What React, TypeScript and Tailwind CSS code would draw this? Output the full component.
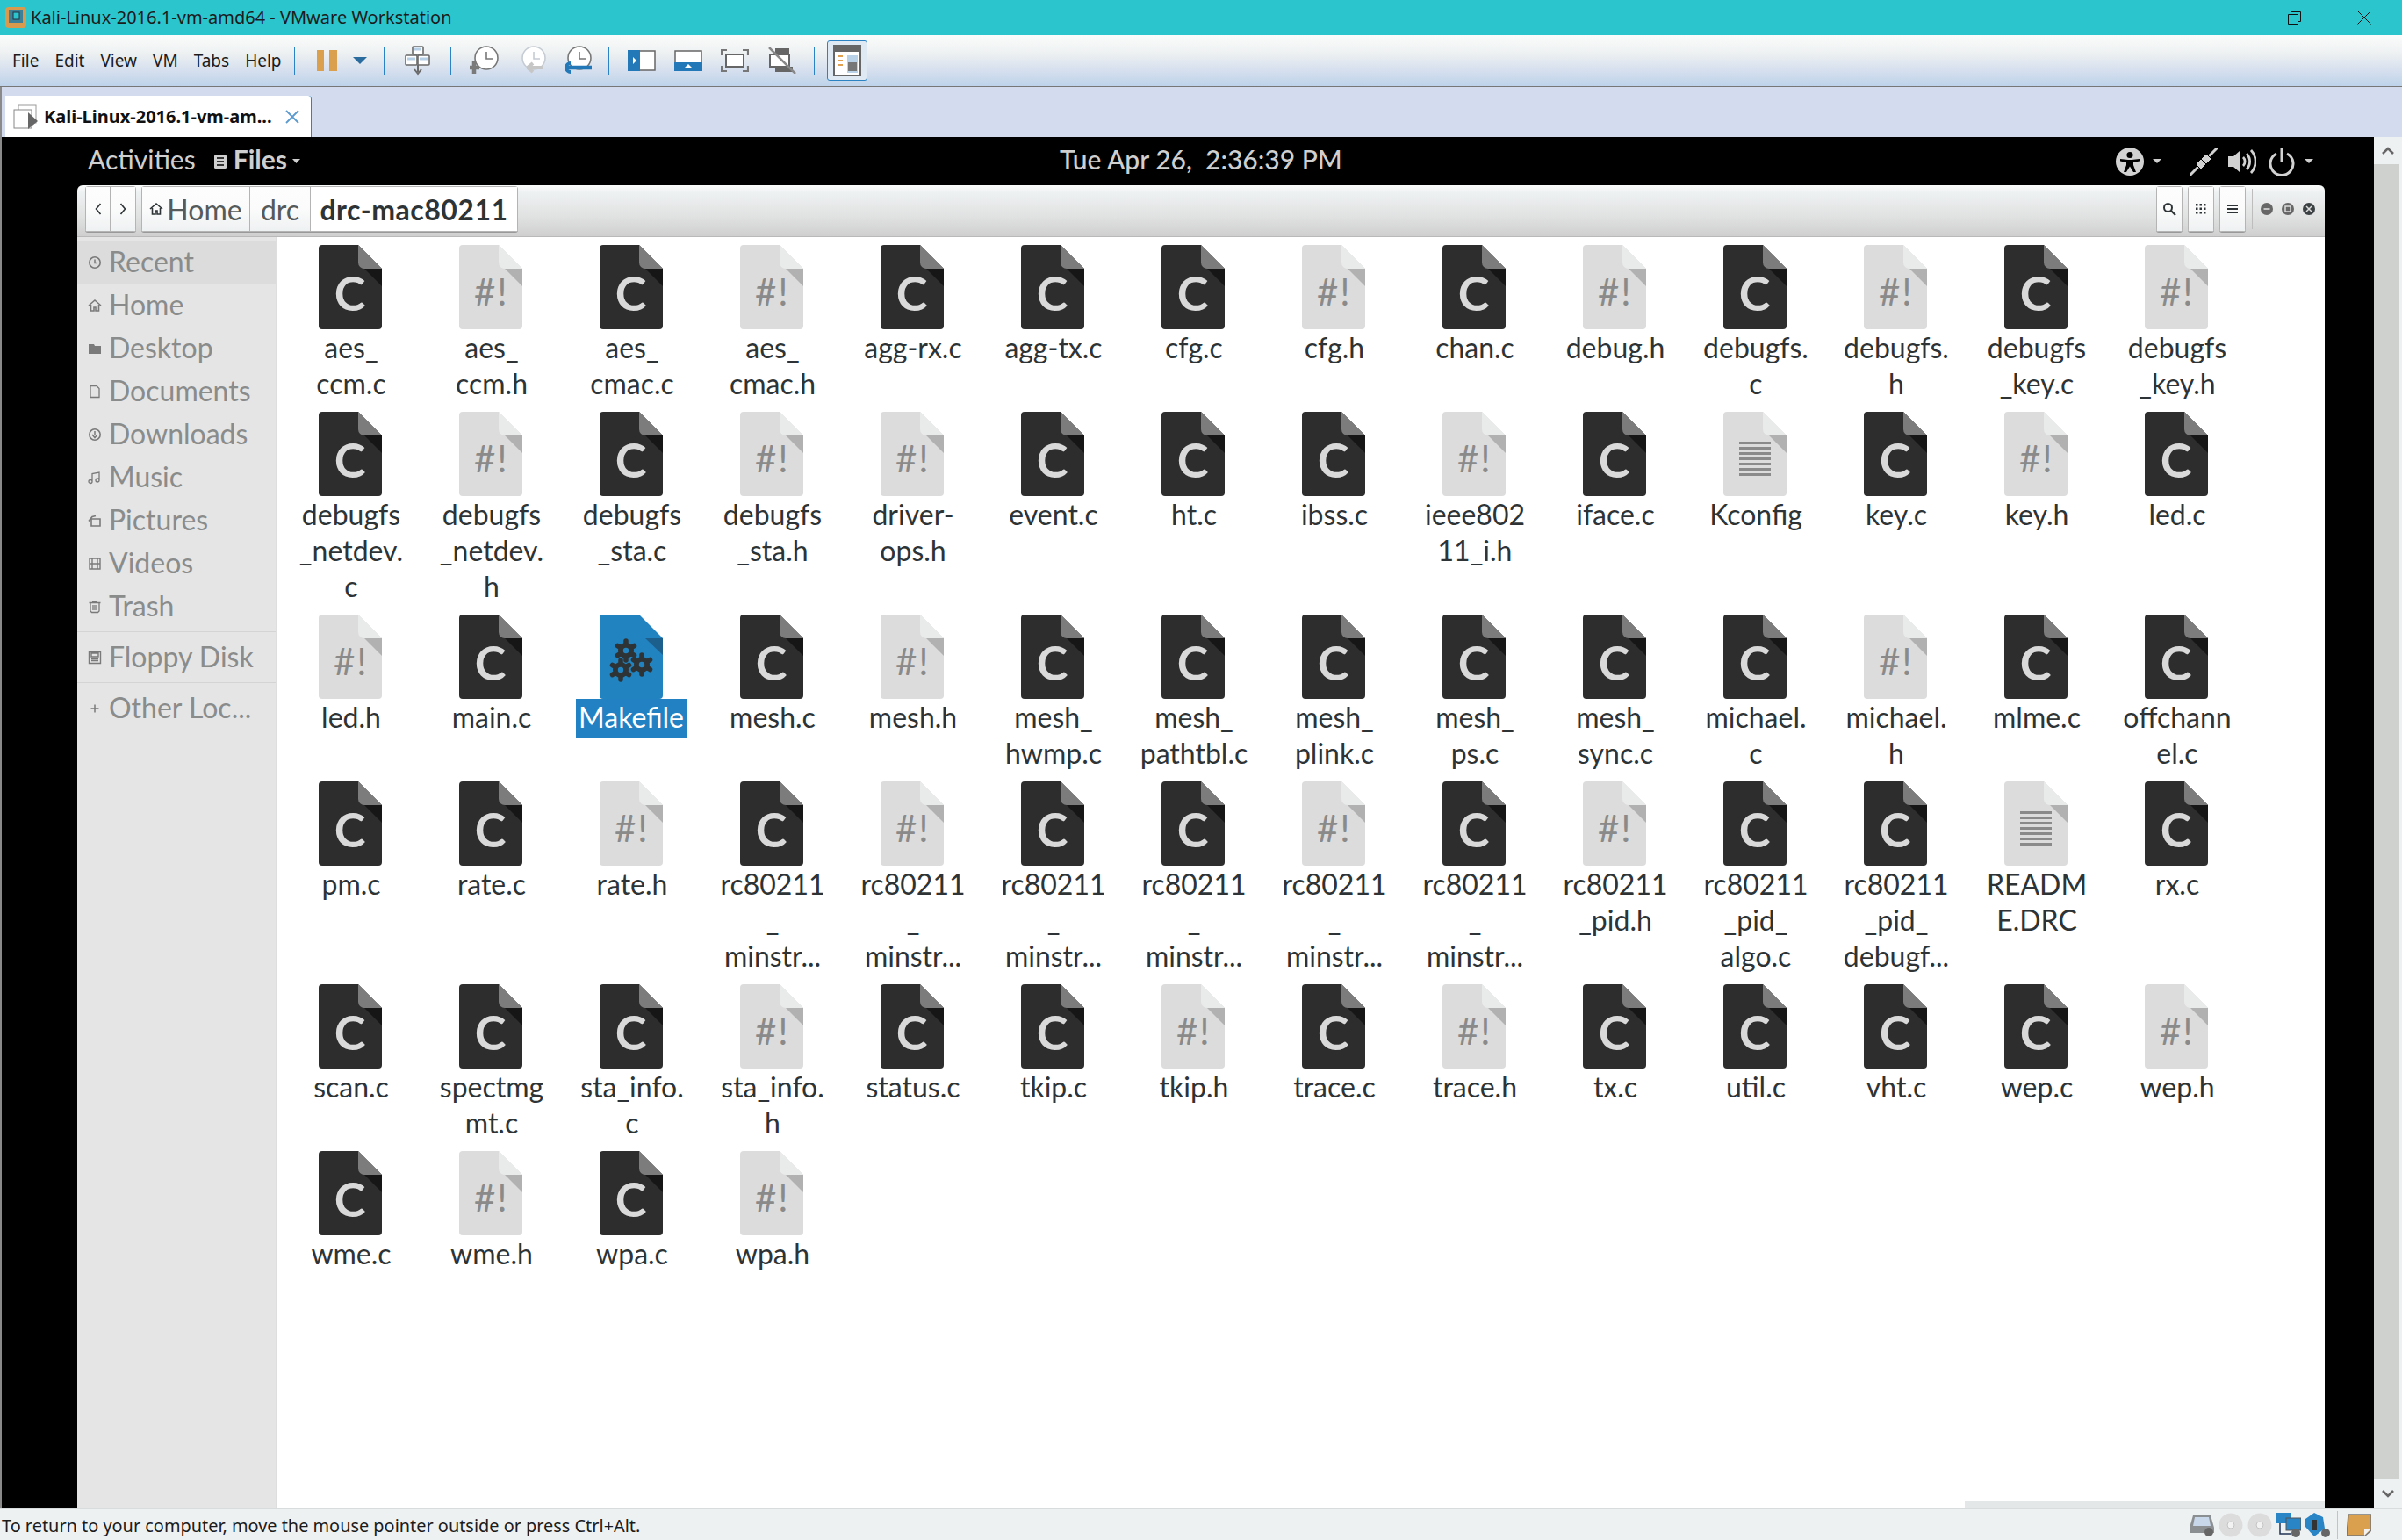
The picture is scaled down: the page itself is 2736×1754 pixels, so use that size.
const files = [
  'c aes_|ccm.c', 'h aes_|ccm.h', 'c aes_|cmac.c', 'h aes_|cmac.h', 'c agg-rx.c', 'c agg-tx.c', 'c cfg.c', 'h cfg.h', 'c chan.c', 'h debug.h', 'c debugfs.|c', 'h debugfs.|h', 'c debugfs|_key.c', 'h debugfs|_key.h',
  'c debugfs|_netdev.|c', 'h debugfs|_netdev.|h', 'c debugfs|_sta.c', 'h debugfs|_sta.h', 'h driver-|ops.h', 'c event.c', 'c ht.c', 'c ibss.c', 'h ieee802|11_i.h', 'c iface.c', 't Kconfig', 'c key.c', 'h key.h', 'c led.c',
  'h led.h', 'c main.c', 'm Makefile', 'c mesh.c', 'h mesh.h', 'c mesh_|hwmp.c', 'c mesh_|pathtbl.c', 'c mesh_|plink.c', 'c mesh_|ps.c', 'c mesh_|sync.c', 'c michael.|c', 'h michael.|h', 'c mlme.c', 'c offchann|el.c',
  'c pm.c', 'c rate.c', 'h rate.h', 'c rc80211|_|minstr...', 'h rc80211|_|minstr...', 'c rc80211|_|minstr...', 'c rc80211|_|minstr...', 'h rc80211|_|minstr...', 'c rc80211|_|minstr...', 'h rc80211|_pid.h', 'c rc80211|_pid_|algo.c', 'c rc80211|_pid_|debugf...', 't READM|E.DRC', 'c rx.c',
  'c scan.c', 'c spectmg|mt.c', 'c sta_info.|c', 'h sta_info.|h', 'c status.c', 'c tkip.c', 'h tkip.h', 'c trace.c', 'h trace.h', 'c tx.c', 'c util.c', 'c vht.c', 'c wep.c', 'h wep.h',
  'c wme.c', 'h wme.h', 'c wpa.c', 'h wpa.h',
];

const BODY = 'M4 0H45L72 27V92a4 4 0 0 1-4 4H4a4 4 0 0 1-4-4V4a4 4 0 0 1 4-4Z';

function Gear({ x, y }: { x: number; y: number }) {
  return (
    <g transform={`translate(${x} ${y})`}>
      {[0, 60, 120].map((a) => (
        <line key={a} x1="0" y1="-11" x2="0" y2="11" stroke="#2e3436" strokeWidth="5.5" strokeLinecap="round" transform={`rotate(${a})`} />
      ))}
      <circle r="9" fill="#2e3436" />
      <circle r="3.2" fill="#2283c1" />
    </g>
  );
}

function FileIcon({ type }: { type: string }) {
  if (type === 'm') {
    return (
      <svg width="72" height="96" viewBox="0 0 72 96" className="shrink-0">
        <path d={BODY} fill="#2283c1" />
        <path d="M52 27H72V46Z" fill="#1d5f8c" />
        <Gear x={30} y={41} />
        <Gear x={48} y={57} />
        <Gear x={24} y={63} />
      </svg>
    );
  }
  const dark = type === 'c';
  return (
    <svg width="72" height="96" viewBox="0 0 72 96" className="shrink-0">
      <path d={BODY} fill={dark ? '#2d2d2d' : '#dcdcdc'} />
      <path d="M45 0L72 27H52a7 7 0 0 1-7-7Z" fill={dark ? '#7c7c7c' : '#e9eaea'} />
      <path d="M52 27H72V47Z" fill={dark ? '#161616' : '#b0b1b0'} />
      {dark && (
        <text x="35.5" y="74.5" textAnchor="middle" fontSize="54" fontWeight="700" fontFamily="Lato, sans-serif" fill="#d9d9d9">
          C
        </text>
      )}
      {type === 'h' && (
        <text x="17" y="69" fontSize="42" fontFamily="Lato, sans-serif" fill="#8a8a8a" letterSpacing="2">
          #!
        </text>
      )}
      {type === 't' && [34, 40, 46, 52, 58, 64, 70].map((y) => <rect key={y} x="18" y={y} width="36" height="3" fill="#8a8a8a" />)}
    </svg>
  );
}

function FileCell({ spec }: { spec: string }) {
  const type = spec[0];
  const lines = spec.slice(2).split('|');
  const selected = type === 'm';
  return (
    <div className="flex flex-col items-center">
      <FileIcon type={type} />
      <div className={`pb-[3px] text-center text-[32px] leading-[41px] ${selected ? 'w-[126px] bg-[#2181c2] text-white' : 'pl-[2px] text-[#2e3436]'}`}>
        {lines.map((l, i) => (
          <div key={i} className="whitespace-nowrap">
            {l}
          </div>
        ))}
      </div>
    </div>
  );
}

const sideIcons: Record<string, React.ReactNode> = {
  Recent: (
    <>
      <circle cx="8" cy="8" r="6.2" fill="none" stroke="currentColor" strokeWidth="1.6" />
      <path d="M8 4.5V8.5H11" fill="none" stroke="currentColor" strokeWidth="1.5" />
    </>
  ),
  Home: <path d="M1 8L8 2L15 8M3.5 7V14H7V10H9V14H12.5V7" fill="none" stroke="currentColor" strokeWidth="1.6" />,
  Desktop: <path d="M1 3H7L8 5H15V14H1Z" fill="currentColor" />,
  Documents: <path d="M3 1.5H10L13 4.5V14.5H3Z" fill="none" stroke="currentColor" strokeWidth="1.3" />,
  Downloads: (
    <>
      <circle cx="8" cy="8" r="6.2" fill="none" stroke="currentColor" strokeWidth="1.6" />
      <path d="M8 4V9M5 8L8 11.5L11 8" fill="none" stroke="currentColor" strokeWidth="1.5" />
    </>
  ),
  Music: <path d="M5 12.5V3.5L13 2V11M5 12.5a2 2 0 1 1-4 0a2 2 0 0 1 4 0ZM13 11a2 2 0 1 1-4 0a2 2 0 0 1 4 0Z" fill="none" stroke="currentColor" strokeWidth="1.3" />,
  Pictures: <path d="M4 6H14V14H4ZM1 8.5L5 3.5L9 2.5" fill="none" stroke="currentColor" strokeWidth="1.6" />,
  Videos: <path d="M2 2H14V14H2ZM5 2V14M11 2V14M2 8H14" fill="none" stroke="currentColor" strokeWidth="1.4" />,
  Trash: <path d="M1.5 3.5H14.5M3 3.5V13L4.5 14.5H11.5L13 13V3.5M5 2H11M6 6V12M8 6V12M10 6V12" fill="none" stroke="currentColor" strokeWidth="1.3" />,
  'Floppy Disk': <path d="M1.5 1.5H14.5V14.5H1.5ZM4 3H12V7H4ZM4 9.5H12M4 11.5H12" fill="none" stroke="currentColor" strokeWidth="1.4" />,
  'Other Loc...': <path d="M8 3.5V12.5M3.5 8H12.5" fill="none" stroke="currentColor" strokeWidth="1.5" />,
};

function SideRow({ label, active }: { label: string; active?: boolean }) {
  return (
    <div className={`flex h-[49px] items-center gap-2 pl-3 text-[32px] text-[#8a8c8c] ${active ? 'bg-[#dcdcdc]' : ''}`}>
      <svg width="16" height="16" viewBox="0 0 16 16" className="shrink-0 text-[#7a7a7a]">
        {sideIcons[label]}
      </svg>
      <span className="-translate-y-px">{label}</span>
    </div>
  );
}

function Sep() {
  return <div className="h-8 w-px shrink-0 bg-[#2b83c4]" />;
}

function ClockIcon({ tone, children }: { tone: string; children: React.ReactNode }) {
  return (
    <svg width="36" height="34" viewBox="0 0 36 34" className="shrink-0">
      <circle cx="20" cy="14" r="13" fill="#fff" stroke={tone} strokeWidth="1.6" />
      <path d="M20 7V15H27" fill="none" stroke={tone} strokeWidth="1.6" />
      {children}
    </svg>
  );
}

function Toolbar() {
  return (
    <div className="flex h-[59px] shrink-0 items-center border-b border-[#777] bg-[linear-gradient(180deg,#fbfcfc_0%,#eef1f2_35%,#d5dfee_70%,#bed3ea_100%)] pl-[14px] text-[19px] text-[#1c1c1c] font-['Noto_Sans',sans-serif]">
      <div className="flex w-[321px] shrink-0 gap-[18px]">
        {['File', 'Edit', 'View', 'VM', 'Tabs', 'Help'].map((m) => (
          <span key={m}>{m}</span>
        ))}
      </div>
      <Sep />
      <div className="ml-[25px] flex gap-[6px]">
        <div className="h-6 w-2 bg-[#dba04e]" />
        <div className="h-6 w-[9px] bg-[#dba04e]" />
      </div>
      <svg width="16" height="8" viewBox="0 0 16 8" className="ml-[18px]">
        <path d="M0 0H16L8 8Z" fill="#2b6c9e" />
      </svg>
      <div className="ml-[19px]">
        <Sep />
      </div>
      <svg width="30" height="34" viewBox="0 0 30 34" className="ml-[23px]">
        <g fill="#fff" stroke="#6a6a6a" strokeWidth="1.6">
          <rect x="9" y="1" width="12" height="9" rx="1" />
          <rect x="1" y="11" width="13" height="11" rx="1" />
          <rect x="15" y="11" width="13" height="11" rx="1" />
        </g>
        <path d="M11 4H19M3 15H12M17 15H26" stroke="#b5cfe6" strokeWidth="3" />
        <path d="M15 22V30M11 27L15 32L19 27" fill="none" stroke="#6a6a6a" strokeWidth="2" />
      </svg>
      <div className="ml-[22px]">
        <Sep />
      </div>
      <div className="ml-[20px]">
        <ClockIcon tone="#777">
          <path d="M6 18V32M1 25H12" stroke="#7a7a7a" strokeWidth="4.5" />
        </ClockIcon>
      </div>
      <div className="ml-[18px]">
        <ClockIcon tone="#c6ccd4">
          <path d="M12 25H30M13 25L19 20M13 25L19 30" stroke="#c6c6c6" strokeWidth="4" fill="none" />
        </ClockIcon>
      </div>
      <div className="ml-[16px]">
        <ClockIcon tone="#777">
          <path d="M6 25H34" stroke="#2379b8" strokeWidth="4.5" />
          <path d="M10 20a5 5 0 1 0 0 10" fill="none" stroke="#2379b8" strokeWidth="4" />
        </ClockIcon>
      </div>
      <div className="ml-[17px]">
        <Sep />
      </div>
      <svg width="32" height="24" viewBox="0 0 32 24" className="ml-[21px]">
        <rect x="1" y="1" width="30" height="22" fill="#fff" stroke="#666" strokeWidth="1.5" />
        <rect width="14" height="24" fill="#2379b8" />
        <path d="M6 8L10 12L6 16Z" fill="#fff" />
      </svg>
      <svg width="32" height="24" viewBox="0 0 32 24" className="ml-[21px]">
        <rect x="1" y="1" width="30" height="22" fill="#fff" stroke="#666" strokeWidth="1.5" />
        <rect y="14" width="32" height="10" fill="#2379b8" />
        <path d="M12 20L16 16L20 20Z" fill="#fff" />
      </svg>
      <svg width="32" height="26" viewBox="0 0 32 26" className="ml-[21px]">
        <rect x="6" y="6" width="20" height="14" fill="#fff" stroke="#666" strokeWidth="2" />
        <path d="M1 7V1H7M25 1H31V7M1 19V25H7M25 25H31V19" fill="none" stroke="#777" strokeWidth="2.2" />
      </svg>
      <svg width="32" height="30" viewBox="0 0 32 30" className="ml-[22px]">
        <rect x="8" y="1" width="16" height="14" fill="#666" />
        <rect x="2" y="8" width="22" height="14" fill="#fff" stroke="#666" strokeWidth="2" />
        <rect x="8" y="22" width="20" height="6" fill="#666" />
        <path d="M1 0L31 30" stroke="#888" strokeWidth="2.5" />
      </svg>
      <div className="ml-[20px]">
        <Sep />
      </div>
      <div className="ml-[14px] flex h-[46px] w-[46px] items-center justify-center rounded-[3px] border border-[#2b83c4] bg-[#dfe9f3]">
        <svg width="32" height="36" viewBox="0 0 32 36">
          <rect width="32" height="36" fill="#666" />
          <rect x="2" y="8" width="28" height="26" fill="#fff" />
          <rect x="16" y="12" width="12" height="20" fill="#b9d2e8" />
          <rect x="17" y="20" width="10" height="10" fill="#777" />
          <path d="M5 13H11M5 18H11M5 23H11" stroke="#e0a050" strokeWidth="2" />
        </svg>
      </div>
    </div>
  );
}

function HeaderButton({ children, className = '' }: { children: React.ReactNode; className?: string }) {
  return (
    <div className={`flex h-[50px] items-center justify-center border-[#b4b4b4] bg-[linear-gradient(180deg,#fdfdfd_0%,#fbfbfb_50%,#eef1f2_100%)] ${className}`}>
      {children}
    </div>
  );
}

function WinDot({ bg, children }: { bg: string; children: React.ReactNode }) {
  return (
    <svg width="14" height="14" viewBox="0 0 14 14" className="shrink-0">
      <circle cx="7" cy="7" r="7" fill={bg} />
      {children}
    </svg>
  );
}

function WindowHeader() {
  return (
    <div className="flex h-[59px] shrink-0 items-center rounded-t-[6px] border-b border-[#b9b9b9] bg-[linear-gradient(180deg,#fafbfb_0%,#eef1f2_15%,#e1e2e2_60%,#cfcfcf_100%)] pb-[5px] pl-[9px] text-[32px]">
      <div className="flex rounded-[3px] border border-[#b4b4b4] shadow-[0_1px_0_#999]">
        <HeaderButton className="w-7 border-r">
          <svg width="10" height="16" viewBox="0 0 10 16">
            <path d="M7.5 2L2.5 8L7.5 14" fill="none" stroke="#2e3436" strokeWidth="1.6" />
          </svg>
        </HeaderButton>
        <HeaderButton className="w-7">
          <svg width="10" height="16" viewBox="0 0 10 16">
            <path d="M2.5 2L7.5 8L2.5 14" fill="none" stroke="#2e3436" strokeWidth="1.6" />
          </svg>
        </HeaderButton>
      </div>
      <div className="ml-[6px] flex rounded-[3px] border border-[#b4b4b4] shadow-[0_1px_0_#999]">
        <HeaderButton className="w-[123px] gap-[4px] border-r text-[#555a5a]">
          <svg width="16" height="16" viewBox="0 0 16 16">
            <path d="M1 8L8 2L15 8M3.5 7V14H7V10H9V14H12.5V7" fill="none" stroke="#2e3436" strokeWidth="1.6" />
          </svg>
          <span className="pt-[3px]">Home</span>
        </HeaderButton>
        <HeaderButton className="w-[69px] border-r pt-[3px] text-[#555a5a]">drc</HeaderButton>
        <div className="flex h-[50px] w-[235px] items-center justify-center bg-white pt-[3px] font-bold tracking-[0.5px] text-[#2e3436]">drc-mac80211</div>
      </div>
      <div className="ml-auto flex items-center gap-[6px]">
        <div className="flex rounded-[3px] border border-[#b4b4b4] shadow-[0_1px_0_#999]">
          <HeaderButton className="w-[28px]">
            <svg width="16" height="16" viewBox="0 0 16 16">
              <circle cx="6.5" cy="6.5" r="4.5" fill="none" stroke="#2e3436" strokeWidth="2" />
              <path d="M10 10L15 15" stroke="#2e3436" strokeWidth="2.2" />
            </svg>
          </HeaderButton>
        </div>
        <div className="flex rounded-[3px] border border-[#b4b4b4] shadow-[0_1px_0_#999]">
          <HeaderButton className="w-[28px]">
            <svg width="12" height="12" viewBox="0 0 12 12" fill="#2e3436">
              {[0, 4.5, 9].map((y) => [0, 4.5, 9].map((x) => <rect key={`${x}-${y}`} x={x} y={y} width="2.5" height="2.5" />))}
            </svg>
          </HeaderButton>
        </div>
        <div className="flex rounded-[3px] border border-[#b4b4b4] shadow-[0_1px_0_#999]">
          <HeaderButton className="w-[28px]">
            <svg width="12" height="12" viewBox="0 0 12 12" fill="#2e3436">
              <rect y="1" width="12" height="2" />
              <rect y="5" width="12" height="2" />
              <rect y="9" width="12" height="2" />
            </svg>
          </HeaderButton>
        </div>
        <div className="ml-[1px] h-[46px] w-px bg-[#bdbdbd]" />
        <div className="ml-[3px] mr-[11px] flex gap-[10px]">
          <WinDot bg="#676767">
            <path d="M3.5 7H10.5" stroke="#ddd" strokeWidth="1.6" />
          </WinDot>
          <WinDot bg="#676767">
            <rect x="4" y="4" width="6" height="6" fill="none" stroke="#ddd" strokeWidth="1.5" />
          </WinDot>
          <WinDot bg="#3b4043">
            <path d="M4 4L10 10M10 4L4 10" stroke="#ddd" strokeWidth="1.5" />
          </WinDot>
        </div>
      </div>
    </div>
  );
}

function TopBar() {
  return (
    <div className="flex h-[55px] shrink-0 items-center text-[30px] text-[#cfcfcf]">
      <div className="flex w-[1205px] shrink-0 items-center pl-[98px]">
        <span className="-translate-y-[2px]">Activities</span>
        <svg width="14" height="16" viewBox="0 0 14 16" className="ml-[21px]">
          <rect width="14" height="16" rx="1.5" fill="#cfcfcf" />
          <path d="M3 4H11M3 8H11M3 12H11" stroke="#000" strokeWidth="1.6" />
        </svg>
        <span className="ml-2 -translate-y-[2px] font-bold">Files</span>
        <svg width="9" height="5" viewBox="0 0 9 5" className="ml-[6px]">
          <path d="M0 0H9L4.5 5Z" fill="#cfcfcf" />
        </svg>
      </div>
      <span className="-translate-y-[2px] whitespace-pre font-medium">Tue Apr 26,  2:36:39 PM</span>
      <div className="ml-auto flex items-center pr-[69px]">
        <svg width="32" height="32" viewBox="0 0 32 32">
          <circle cx="16" cy="16" r="16" fill="#d2d2d2" />
          <circle cx="16" cy="8.5" r="3.6" fill="#000" />
          <path d="M5 13L14 14H18L27 13V15.5L20 17V20L23 28H20L16 21.5L12 28H9L12 20V17L5 15.5Z" fill="#000" />
        </svg>
        <svg width="10" height="5" viewBox="0 0 10 5" className="ml-[10px]">
          <path d="M0 0H10L5 5Z" fill="#cfcfcf" />
        </svg>
        <svg width="32" height="32" viewBox="0 0 32 32" className="ml-[32px]">
          <path d="M1 31L9 23M23 9L31 1" stroke="#d2d2d2" strokeWidth="3" strokeLinecap="round" />
          <path d="M7 19L13 13L19 19L13 25ZM13 13L19 7L25 13L19 19Z" fill="#d2d2d2" stroke="#000" strokeWidth="1" />
        </svg>
        <svg width="32" height="32" viewBox="0 0 32 32" className="ml-[12px]">
          <path d="M0 10H6L13 4V28L6 22H0Z" fill="#d2d2d2" />
          <path d="M17 11a7 7 0 0 1 0 10M21 7a13 13 0 0 1 0 18M26 3a19 19 0 0 1 0 26" fill="none" stroke="#d2d2d2" strokeWidth="2.8" />
        </svg>
        <svg width="30" height="32" viewBox="0 0 30 32" className="ml-[14px]">
          <path d="M9 7a13 13 0 1 0 12 0" fill="none" stroke="#d2d2d2" strokeWidth="3" />
          <path d="M15 1V16" stroke="#d2d2d2" strokeWidth="3" />
        </svg>
        <svg width="10" height="5" viewBox="0 0 10 5" className="ml-[11px]">
          <path d="M0 0H10L5 5Z" fill="#cfcfcf" />
        </svg>
      </div>
    </div>
  );
}

function StatusIcons() {
  return (
    <div className="ml-auto flex items-center gap-[5px] pr-[35px]">
      <svg width="28" height="26" viewBox="0 0 28 26">
        <path d="M4 2H24L28 16V22H0V16Z" fill="#8b8f92" />
        <path d="M6 4H22L24 14H4Z" fill="#c9d7ea" />
        <circle cx="22" cy="21" r="5" fill="#666" />
      </svg>
      {[0, 1].map((i) => (
        <svg key={i} width="28" height="28" viewBox="0 0 28 28">
          <circle cx="14" cy="14" r="13.5" fill="#dcdcdc" />
          <circle cx="14" cy="14" r="4" fill="#f2f2f2" stroke="#c4c4c4" />
        </svg>
      ))}
      <svg width="28" height="28" viewBox="0 0 28 28">
        <rect width="16" height="12" fill="#2a85c6" />
        <rect x="11" y="6" width="17" height="14" fill="#2a85c6" stroke="#555" />
        <path d="M4 12V24H16" fill="none" stroke="#235" strokeWidth="1.5" />
        <circle cx="22" cy="23" r="5" fill="#666" />
      </svg>
      <svg width="28" height="28" viewBox="0 0 28 28">
        <path d="M10 0L20 5L22 18L10 27L0 16V7Z" fill="#2a85c6" />
        <rect x="7" y="8" width="6" height="12" fill="#333" />
        <circle cx="23" cy="23" r="5" fill="#666" />
      </svg>
      <div className="ml-[3px] mr-[5px] h-8 w-px bg-[#bfc4c6]" />
      <svg width="28" height="26" viewBox="0 0 28 26">
        <path d="M2 1H28V19L21 25H0Z" fill="#dba04e" stroke="#777" strokeWidth="1.5" />
        <path d="M20 25V18H27Z" fill="#f2f2f2" />
      </svg>
    </div>
  );
}

export default function App() {
  return (
    <div className="flex h-[1754px] w-[2736px] flex-col overflow-hidden bg-[#eef1f2] font-['Lato',sans-serif]">
      <div className="flex h-10 shrink-0 items-center bg-[#2bc5ce] pl-[6px] text-[20px] text-[#1c1c1c] font-['Noto_Sans',sans-serif]">
        <svg width="24" height="24" viewBox="0 0 24 24">
          <rect width="24" height="24" rx="4" fill="#d99a4e" />
          <rect x="4" y="3" width="16" height="15" fill="#3d7f96" />
          <rect x="9" y="6" width="7" height="8" fill="#2bc5ce" stroke="#234" />
        </svg>
        <span className="ml-[5px]">Kali-Linux-2016.1-vm-amd64 - VMware Workstation</span>
        <div className="ml-auto flex pr-[3px]">
          <div className="flex h-10 w-20 items-center justify-center">
            <div className="h-px w-[15px] bg-[#111]" />
          </div>
          <div className="flex h-10 w-20 items-center justify-center">
            <svg width="15" height="15" viewBox="0 0 15 15">
              <path d="M3.5 3.5V.5H14.5V11.5H11.5M.5 3.5H11.5V14.5H.5Z" fill="none" stroke="#111" />
            </svg>
          </div>
          <div className="flex h-10 w-20 items-center justify-center">
            <svg width="16" height="16" viewBox="0 0 16 16">
              <path d="M.5 .5L15.5 15.5M15.5 .5L.5 15.5" stroke="#111" />
            </svg>
          </div>
        </div>
      </div>
      <Toolbar />
      <div className="flex h-[57px] shrink-0 items-end border-l-2 border-[#8a8a8a] bg-[#d3dcee] pl-1 font-['Noto_Sans',sans-serif]">
        <div className="flex h-[47px] w-[349px] items-center rounded-tr-[4px] border-r border-[#2b83c4] bg-white pl-[9px]">
          <svg width="30" height="28" viewBox="0 0 30 28" className="shrink-0">
            <rect x="6" y="1" width="20" height="20" fill="#fff" stroke="#999" />
            <rect x="1" y="6" width="20" height="21" fill="#fff" stroke="#888" />
            <path d="M17 9L28 19L17 28Z" fill="#666" />
          </svg>
          <span className="ml-[5px] whitespace-nowrap text-[20px] font-bold text-[#111]">Kali-Linux-2016.1-vm-am...</span>
          <svg width="16" height="16" viewBox="0 0 16 16" className="ml-[15px] shrink-0">
            <path d="M1 1L15 15M15 1L1 15" stroke="#5b9bd0" strokeWidth="1.8" />
          </svg>
        </div>
      </div>
      <div className="flex h-[1561px] shrink-0 border-l-2 border-[#8a8a8a]">
        <div className="flex w-[2702px] shrink-0 flex-col bg-black">
          <TopBar />
          <div className="ml-[86px] flex w-[2560px] flex-1 flex-col">
            <WindowHeader />
            <div className="flex min-h-0 flex-1">
              <div className="w-[227px] shrink-0 border-r border-[#dedede] bg-[#e5e5e5] pt-1">
                <div className="border-b border-[#d4d4d4] pb-1">
                  {['Recent', 'Home', 'Desktop', 'Documents', 'Downloads', 'Music', 'Pictures', 'Videos', 'Trash'].map((s, i) => (
                    <SideRow key={s} label={s} active={i === 0} />
                  ))}
                </div>
                <div className="border-b border-[#d4d4d4] py-1">
                  <SideRow label="Floppy Disk" />
                </div>
                <div className="pt-1">
                  <SideRow label="Other Loc..." />
                </div>
              </div>
              <div className="flex min-w-0 flex-1 flex-col bg-white">
                <div className="grid flex-1 grid-cols-[repeat(14,160px)] content-start gap-y-[9px] pl-1 pt-[9px]">
                  {files.map((f, i) => (
                    <FileCell key={i} spec={f} />
                  ))}
                </div>
                <div className="flex h-[7px] shrink-0 justify-end">
                  <div className="w-[410px] bg-[#e4e7e7]" />
                </div>
              </div>
            </div>
          </div>
        </div>
        <div className="flex w-[32px] shrink-0 flex-col">
          <div className="flex h-[31px] items-center justify-center">
            <svg width="16" height="10" viewBox="0 0 16 10">
              <path d="M2 8L8 2L14 8" fill="none" stroke="#666" strokeWidth="2.6" />
            </svg>
          </div>
          <div className="w-[29px] flex-1 bg-[#cfd1cf]" />
          <div className="flex h-[33px] items-center justify-center">
            <svg width="16" height="10" viewBox="0 0 16 10">
              <path d="M2 2L8 8L14 2" fill="none" stroke="#666" strokeWidth="2.6" />
            </svg>
          </div>
        </div>
      </div>
      <div className="flex min-h-0 flex-1 items-center border-t-2 border-[#d9dcdd] pl-[2px] text-[19.9px] text-[#1c1c1c] font-['Noto_Sans',sans-serif]">
        <span className="pt-[2px]">To return to your computer, move the mouse pointer outside or press Ctrl+Alt.</span>
        <StatusIcons />
      </div>
    </div>
  );
}
